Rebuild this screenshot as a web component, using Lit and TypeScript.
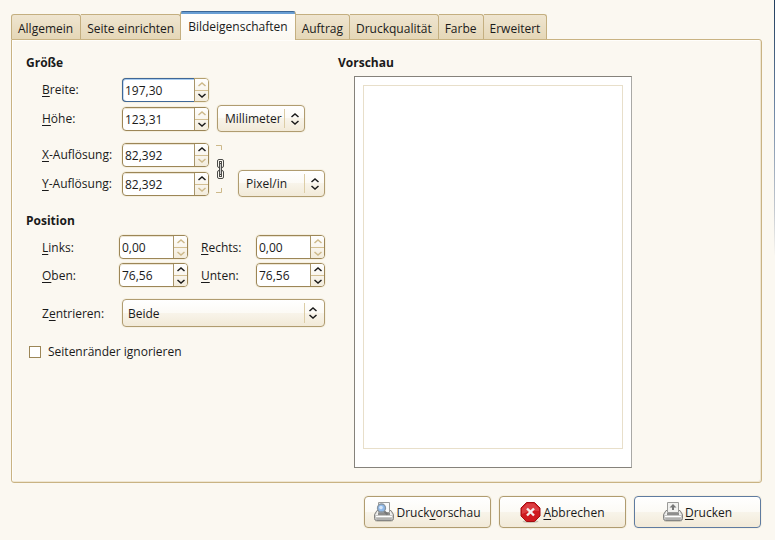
import { LitElement, html, css, svg, nothing } from "lit";
import { customElement, state } from "lit/decorators.js";

const TABS = ["Allgemein", "Seite einrichten", "Bildeigenschaften", "Auftrag", "Druckqualität", "Farbe", "Erweitert"];

/** Label text with the mnemonic letter at index `at` underlined. */
const mnemonic = (text: string, at = 0) =>
  html`${text.slice(0, at)}<u>${text[at]}</u>${text.slice(at + 1)}`;

const chevron = (up: boolean) => html`<svg width="8" height="5" viewBox="0 0 8 5" aria-hidden="true">
  <path d=${up ? "M.5 4 L4 1 L7.5 4" : "M.5 1 L4 4 L7.5 1"} fill="none" stroke="currentColor" stroke-width="1.5" />
</svg>`;

const printerBody = svg`
  <ellipse cx="10" cy="19" rx="9" ry="1.5" fill="#8a8676" opacity=".35" />
  <path d="M3 8.500 L17 8.500 L19.500 12.500 L19.500 16.500 Q19.500 18.500 17.500 18.500 L2.500 18.500 Q.5 18.500 .5 16.500 L.5 12.500 Z" fill="#c6c6c4" stroke="#858583" />
  <path d="M3.500 9 H16.500 L18.500 13 H1.500 Z" fill="#efefed" />
  <path d="M4 12 H16" stroke="#6d6d6b" stroke-width="1.500" />
  <path d="M2 14.500 H18" stroke="#fff" />
  <path d="M2.500 17 H17.500" stroke="#9d9d9b" />`;

@customElement("app-root")
export class AppRoot extends LitElement {
  @state() private active = 2;

  static styles = css`
    :host {
      display: block;
      box-sizing: border-box;
      min-height: 100vh;
      padding: 11px 13px 11px 11px;
      background: linear-gradient(#1f3c5c, #7088a6 110px, #c4c9cf 210px, #fbf8f1 256px) right / 1px 100% no-repeat #fbf8f1;
      color: #1a1a1a;
      font: 12px/16px "Open Sans", "Noto Sans", sans-serif;
    }
    button, input, select { font: inherit; color: inherit; margin: 0; box-sizing: border-box; }
    u { text-decoration: underline; text-underline-offset: 2px; text-decoration-thickness: 1px; }
    svg { display: block; flex: none; }

    .tabs { display: flex; align-items: flex-end; }
    .tab {
      height: 25px;
      padding: 3px 6px 0;
      border: 1px solid #c4af80;
      border-width: 1px 1px 0 0;
      border-radius: 0 3px 0 0;
      background: linear-gradient(#efe5d0, #e5d7b7);
      white-space: nowrap;
    }
    .tab:first-child { padding-right: 7px; border-left-width: 1px; border-radius: 3px 3px 0 0; }
    .tab.active {
      height: 29px;
      margin: 0 0 -1px -1px;
      padding: 2px 7px 1px;
      border-left-width: 1px;
      border-top: 1px solid #3c6796;
      border-radius: 3px 3px 0 0;
      background: linear-gradient(#6a9fd4 2px, #fffefc 2px, #fbf8f1);
    }
    .panel {
      display: flex;
      gap: 13px;
      padding: 14px;
      border: 1px solid #c9b383;
      border-radius: 0 3px 3px 3px;
      box-shadow: inset 1px 1px #fffefb, inset -1px -1px #efe6d2;
    }
    .form { width: 299px; }
    h2 { margin: 0 0 4px; font: bold 12px/17px "Open Sans", sans-serif; }
    .form h2 + div ~ h2 { margin-top: 14px; }

    .grid { display: grid; align-items: center; padding-left: 16px; }
    .size { grid-template-columns: 80px 87px auto 1fr; grid-auto-rows: 29px; }
    .size .combo { justify-self: start; }
    .size .tail { grid-column: 3 / 5; margin-left: 8px; }
    .resolution { margin-top: 7px; }
    .resolution label { grid-column: 1; }
    .resolution .spin { grid-column: 2; }
    .chain { grid-area: 1 / 3 / 3 / 4; margin-left: 7px; padding: 0; border: 0; background: none; }
    .resolution .combo { grid-area: 2 / 4; margin-left: 14px; }
    .position { grid-template-columns: 77px 69px 68px 69px; grid-auto-rows: 28px; }
    .position label, .center label, .check { padding-top: 1px; }
    .position .second { margin-left: 13px; }
    .center { grid-template-columns: 80px 1fr; margin-top: 10px; }

    .spin {
      display: flex;
      height: 24px;
      box-sizing: border-box;
      border: 1px solid #9c8657;
      border-radius: 4px;
      background: #fff;
      box-shadow: 0 0 0 1px #f5efdf;
    }
    .spin input {
      flex: 1;
      min-width: 0;
      padding: 2px 2px 0;
      border: 0;
      border-radius: 3px 0 0 3px;
      outline: 0;
      background: none;
      box-shadow: inset 0 1px #ece5d4;
    }
    .spin.focus { border-color: #b4a070; }
    .spin.focus input {
      margin: -1px 0 -1px -1px;
      border: 1px solid #3f6797;
      border-right: 0;
      border-radius: 4px 0 0 4px;
      box-shadow: inset 0 1px #a9cdf0, inset 1px 0 #c5dcf4;
    }
    .arrows {
      display: grid;
      grid-template-rows: 1fr 1fr;
      width: 13px;
      border-left: 1px solid #a8956a;
      border-radius: 0 3px 3px 0;
      background: linear-gradient(#fff, #f3ecdc);
    }
    .arrows button { display: grid; place-items: center; padding: 0; border: 0; background: none; }
    .arrows button + button { border-top: 1px solid #d3bf92; }
    .arrows button:disabled { color: #cdb98a; }

    .combo { position: relative; height: 27px; }
    .combo select {
      width: 100%;
      height: 100%;
      padding: 1px 20px 0 7px;
      appearance: none;
      border: 1px solid #b09c70;
      border-radius: 4px;
      background: linear-gradient(#fff, #fcfaf5 50%, #f8f4ea 50%, #f2ead8);
      box-shadow: 0 0 0 1px #f6f1e4;
    }
    .unit { width: 87px; }
    .tail.unit { width: 88px; }
    .wide { height: 28px; }
    .wide select { padding-left: 5px; }
    .combo .mark {
      position: absolute;
      inset: 4px 6px 4px auto;
      display: grid;
      align-content: center;
      gap: 2px;
      padding-left: 6px;
      border-left: 1px solid #dccda6;
      pointer-events: none;
    }
    .wide .mark { right: 8px; padding-left: 4px; }

    .check { display: flex; align-items: center; gap: 7px; margin: 16px 0 0 3px; }
    .check input { width: 12px; height: 12px; appearance: none; border: 1px solid #9c8657; background: #fff; }
    .check input:checked { background: #3f6797; }

    .paper {
      box-sizing: border-box;
      width: 278px;
      margin: 5px 0 0 16px;
      padding: 8px;
      border: 1px solid #85827b;
      border-right-color: #a9a9a6;
      background: #fff;
    }
    .margins { box-sizing: border-box; aspect-ratio: 260 / 364; margin-bottom: 10px; border: 1px solid #e8dfca; }

    .actions { display: flex; justify-content: flex-end; gap: 8px; margin-top: 13px; padding-right: 1px; }
    .action {
      display: flex;
      align-items: center;
      justify-content: center;
      gap: 2px;
      width: 127px;
      height: 32px;
      padding: 0;
      border: 1px solid #b09c70;
      border-radius: 4px;
      background: linear-gradient(#fff, #fcfaf5 50%, #f8f4ea 50%, #f2ead8);
      box-shadow: 0 0 0 1px #f6f1e4;
    }
    .action span { padding-top: 2px; }
    .action.default { border-color: #5f7ba0; }
  `;

  private spin(id: string, value: string, up = true, down = true, cls = "") {
    return html`<div class="spin ${cls}">
      <input id=${id} type="text" inputmode="decimal" .value=${value} />
      <span class="arrows">
        <button type="button" aria-label="Erhöhen" ?disabled=${!up}>${chevron(true)}</button>
        <button type="button" aria-label="Verringern" ?disabled=${!down}>${chevron(false)}</button>
      </span>
    </div>`;
  }

  private combo(id: string, options: string[], cls: string, label?: string) {
    return html`<div class="combo ${cls}">
      <select id=${id} aria-label=${label ?? nothing}>${options.map((o) => html`<option>${o}</option>`)}</select>
      <span class="mark">${chevron(true)}${chevron(false)}</span>
    </div>`;
  }

  render() {
    return html`
      <div class="tabs" role="tablist">
        ${TABS.map((t, i) => html`<button type="button" role="tab" aria-selected=${i === this.active}
          class="tab ${i === this.active ? "active" : ""}" @click=${() => (this.active = i)}>${t}</button>`)}
      </div>
      <section class="panel" role="tabpanel">
        <div class="form">
          <h2>Größe</h2>
          <div class="grid size">
            <label for="width">${mnemonic("Breite:")}</label>
            ${this.spin("width", "197,30", false, true, "focus")}
            <span class="tail"></span>
            <label for="height">${mnemonic("Höhe:")}</label>
            ${this.spin("height", "123,31", false, true)}
            ${this.combo("unit", ["Millimeter", "Zoll", "Pixel"], "unit tail", "Einheit")}
          </div>
          <div class="grid size resolution">
            <label for="xres">${mnemonic("X-Auflösung:")}</label>
            ${this.spin("xres", "82,392", true, false)}
            <button type="button" class="chain" aria-label="Auflösungen verketten">
              <svg width="8" height="50" viewBox="0 0 8 50" fill="none">
                <path d="M0 1.500 H5.500 V6 M0 48.500 H5.500 V44" stroke="#cdb98a" />
                <g stroke="#4c4c4a">
                  <rect x="1.500" y="15.500" width="6" height="8" rx="1.500" />
                  <rect x="3.500" y="17.500" width="2" height="4" />
                  <rect x="1.500" y="26.500" width="6" height="8" rx="1.500" />
                  <rect x="3.500" y="28.500" width="2" height="4" />
                </g>
                <path d="M4.500 19 V31" stroke="#4c4c4a" stroke-width="3" />
                <path d="M4.500 20 V30" stroke="#ccc" />
              </svg>
            </button>
            <label for="yres">${mnemonic("Y-Auflösung:")}</label>
            ${this.spin("yres", "82,392", true, false)}
            ${this.combo("resunit", ["Pixel/in", "Pixel/mm"], "unit", "Einheit der Auflösung")}
          </div>
          <h2>Position</h2>
          <div class="grid position">
            <label for="left">${mnemonic("Links:")}</label>
            ${this.spin("left", "0,00", false, false)}
            <label class="second" for="right">${mnemonic("Rechts:")}</label>
            ${this.spin("right", "0,00", false, false)}
            <label for="top">${mnemonic("Oben:")}</label>
            ${this.spin("top", "76,56")}
            <label class="second" for="bottom">${mnemonic("Unten:")}</label>
            ${this.spin("bottom", "76,56")}
          </div>
          <div class="grid center">
            <label for="center">${mnemonic("Zentrieren:", 1)}</label>
            ${this.combo("center", ["Beide", "Keine", "Horizontal", "Vertikal"], "wide")}
          </div>
          <label class="check"><input type="checkbox" />Seitenränder ignorieren</label>
        </div>
        <div class="preview">
          <h2>Vorschau</h2>
          <div class="paper"><div class="margins"></div></div>
        </div>
      </section>
      <div class="actions">
        <button type="button" class="action">
          <svg width="20" height="20" viewBox="0 0 20 20">
            ${printerBody}
            <path d="M4.500 .5 H15.500 V10.500 H4.500 Z" fill="#fafafa" stroke="#9b9b99" />
            <path d="M10 9 L13.500 12.500" stroke="#777" stroke-width="2" />
            <circle cx="7.500" cy="6" r="4" fill="#8fb9ea" stroke="#8794a0" stroke-width="1.300" />
            <circle cx="7" cy="5.500" r="1.800" fill="#d5e6fa" />
          </svg>
          <span>${mnemonic("Druckvorschau", 5)}</span>
        </button>
        <button type="button" class="action">
          <svg width="21" height="21" viewBox="0 0 21 21">
            <ellipse cx="10.500" cy="19.500" rx="8" ry="1.500" fill="#7a6a5a" opacity=".35" />
            <path d="M6.500 .5 H14.500 L20 6 V14 L14.500 19.500 H6.500 L1 14 V6 Z" fill="#cf1a20" stroke="#a30d12" />
            <path d="M7 1.500 H14 L19 6.500 V9 Q10 8 2 12 V6.500 Z" fill="#e2575a" opacity=".6" />
            <path d="M7 6.500 L14 13.500 M14 6.500 L7 13.500" stroke="#f4f0f0" stroke-width="2.400" />
          </svg>
          <span>${mnemonic("Abbrechen")}</span>
        </button>
        <button type="button" class="action default">
          <svg width="20" height="20" viewBox="0 0 20 20">
            ${printerBody}
            <path d="M4.500 .5 H15.500 V10.500 H4.500 Z" fill="#f1f1ef" stroke="#9b9b99" />
            <path d="M10 2 L13.500 5.500 H11 V8 H9 V5.500 H6.500 Z" fill="#777" />
          </svg>
          <span>${mnemonic("Drucken")}</span>
        </button>
      </div>
    `;
  }
}
